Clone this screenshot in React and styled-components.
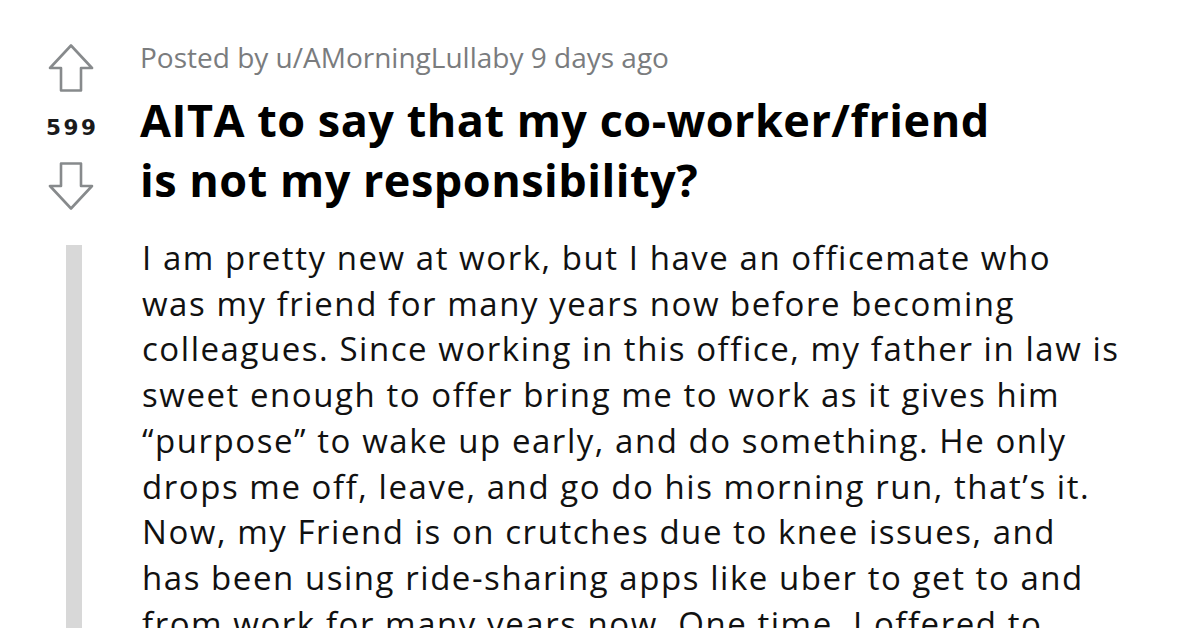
import React from "react";
import styled, { createGlobalStyle } from "styled-components";

const Global = createGlobalStyle`
  html, body { margin: 0; padding: 0; background: #ffffff; }
  body { width: 1200px; height: 628px; overflow: hidden; font-family: "Open Sans", "Noto Sans", sans-serif; }
`;

const Page = styled.div`
  display: grid;
  grid-template-columns: 52px 1fr;
  column-gap: 43px;
  padding: 39px 0 0 45px;
  height: 628px;
  box-sizing: border-box;
  overflow: hidden;
`;

const VoteCol = styled.div`
  display: flex;
  flex-direction: column;
  align-items: center;
  padding-top: 5px;
`;

const Score = styled.div`
  font-family: "DejaVu Sans", "Open Sans", sans-serif;
  font-weight: 700;
  font-size: 21.5px;
  letter-spacing: 2.5px;
  padding-left: 2.5px;
  color: #1a1a1b;
  line-height: 30px;
  margin: 21px 0 19px;
`;

const Header = styled.div`
  display: flex;
  flex-direction: column;
`;

const Meta = styled.div`
  margin-top: 2px;
  font-family: "Open Sans", sans-serif;
  font-size: 28px;
  color: #7a7c7e;
  line-height: 32px;
`;

const Title = styled.h1`
  margin: 16.5px 0 0;
  font-family: "Open Sans", sans-serif;
  font-weight: 700;
  font-size: 45px;
  letter-spacing: 0.5px;
  line-height: 60px;
  color: #000;
  white-space: nowrap;
`;

const QuoteBar = styled.div`
  width: 16px;
  justify-self: center;
  margin-left: 5px;
  background: #d8d8d8;
  margin-top: 35px;
  height: 420px;
`;

const Body = styled.p`
  margin: 25px 0 0;
  font-family: "Open Sans", sans-serif;
  font-size: 33px;
  letter-spacing: 1.55px;
  line-height: 45.7px;
  color: #111;
  padding-left: 2px;
  white-space: nowrap;
`;

const Arrow = ({ down }) => (
  <svg width="46" height="48" viewBox="0 0 46 48" style={down ? { transform: "rotate(180deg)" } : undefined}>
    <path
      d="M23 1.5 L44 24 L33 24 L33 46.5 L13 46.5 L13 24 L2 24 Z"
      fill="none"
      stroke="#878a8c"
      strokeWidth="2.6"
      strokeLinejoin="round"
    />
  </svg>
);

export default function App() {
  return (
    <>
      <Global />
      <Page>
        <VoteCol>
          <Arrow />
          <Score>599</Score>
          <Arrow down />
        </VoteCol>
        <Header>
          <Meta>Posted by u/AMorningLullaby 9 days ago</Meta>
          <Title>
            AITA to say that my co-worker/friend
            <br />
            is not my responsibility?
          </Title>
        </Header>
        <QuoteBar />
        <Body>
          I am pretty new at work, but I have an officemate who
          <br />
          was my friend for many years now before becoming
          <br />
          colleagues. Since working in this office, my father in law is
          <br />
          sweet enough to offer bring me to work as it gives him
          <br />
          “purpose” to wake up early, and do something. He only
          <br />
          drops me off, leave, and go do his morning run, that’s it.
          <br />
          Now, my Friend is on crutches due to knee issues, and
          <br />
          has been using ride-sharing apps like uber to get to and
          <br />
          from work for many years now. One time, I offered to
        </Body>
      </Page>
    </>
  );
}
